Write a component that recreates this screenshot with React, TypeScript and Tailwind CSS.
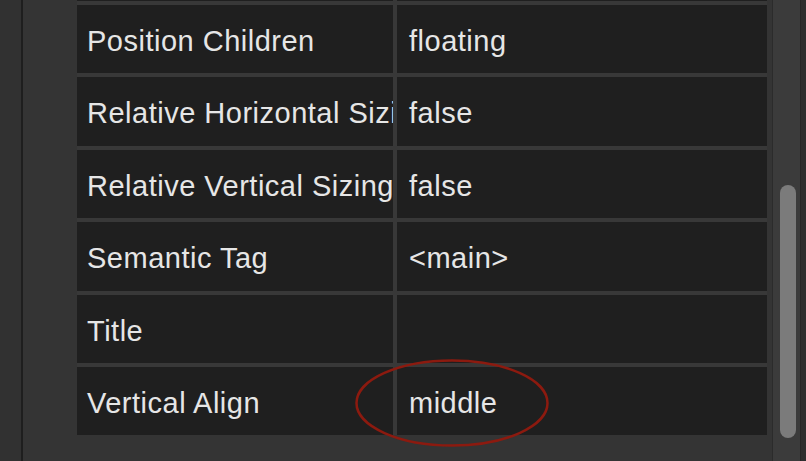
import React from 'react'

type Row = { label: string; value: string }

const rows: Row[] = [
  { label: '', value: '' },
  { label: 'Position Children', value: 'floating' },
  { label: 'Relative Horizontal Sizing', value: 'false' },
  { label: 'Relative Vertical Sizing', value: 'false' },
  { label: 'Semantic Tag', value: '<main>' },
  { label: 'Title', value: '' },
  { label: 'Vertical Align', value: 'middle' },
]

export default function App() {
  return (
    <div
      className="w-[806px] h-[461px] overflow-hidden flex bg-[#313131]"
      style={{ fontFamily: '"Liberation Sans", Arial, sans-serif' }}
    >
      <div className="w-[23px] shrink-0 bg-[#313131] border-r-2 border-[#1e1e1e]" />

      <div className="flex-1 flex bg-[#343434]">
        {/* property table */}
        <div className="relative ml-[54px] w-[690px] shrink-0">
          <div className="-mt-[67.4px] flex flex-col gap-[4px] bg-[#383838]">
            {rows.map((row, i) => (
              <div key={i} className="flex h-[68.4px] gap-[4px]">
                <div className="w-[316px] shrink-0 bg-[#1f1f1f] flex items-center pl-[10px] pt-[5px] overflow-hidden whitespace-nowrap">
                  <span className="text-[29px] text-[#e6e6e6] tracking-[0.5px]">{row.label}</span>
                </div>
                <div className="flex-1 bg-[#1f1f1f] flex items-center pl-[12px] pt-[5px] overflow-hidden whitespace-nowrap">
                  <span className="text-[29px] text-[#e6e6e6] tracking-[0.5px]">{row.value}</span>
                </div>
              </div>
            ))}
          </div>

          {/* annotation */}
          <svg className="absolute left-[277px] top-[358px]" width="196" height="90" viewBox="0 0 196 90">
            <ellipse cx="98" cy="45" rx="95.5" ry="42.5" fill="none" stroke="#8c1a0f" strokeWidth="2.5" />
          </svg>
        </div>

        {/* scrollbar */}
        <div className="ml-[5px] flex-1 flex">
          <div className="w-[1px] bg-[#2b2b2b]" />
          <div className="w-[27px] bg-[#3b3b3b] pl-[7px] pt-[185px]">
            <div className="w-[16px] h-[253px] rounded-full bg-[#7b7b7b]" />
          </div>
          <div className="flex-1 bg-[#2e2e2e] border-l border-[#262626]" />
        </div>
      </div>
    </div>
  )
}
